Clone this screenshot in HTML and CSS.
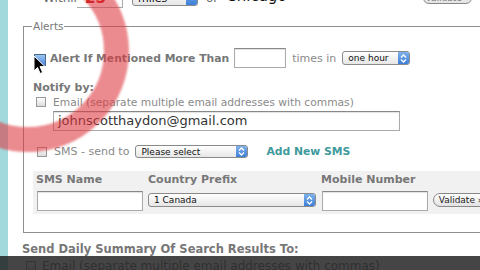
FILE: index.html
```html
<!DOCTYPE html>
<html>
<head>
<meta charset="utf-8">
<link rel="stylesheet" href="styles.css">
</head>
<body>
<div class="page">
  <div class="strip"></div>
  <div class="main">
    <div class="toprow">
      <span class="cb cb-blue"></span>
      <span class="lbl-top">Within</span>
      <span class="inp inp-dist"><span class="red">25</span></span>
      <span class="sel sel-miles"><span class="sel-text">miles</span><span class="sel-cap"></span></span>
      <span class="lbl-top or">or</span>
      <span class="inp inp-city">Chicago</span>
      <span class="btn btn-top">Validate »</span>
    </div>

    <fieldset class="alerts">
      <legend>Alerts</legend>
      <div class="row row-alert">
        <span class="cb cb-checked"></span>
        <span class="blabel">Alert If Mentioned More Than</span>
        <span class="inp inp-count"></span>
        <span class="plabel">times in</span>
        <span class="sel sel-hour"><span class="sel-text">one hour</span><span class="sel-cap"><svg width="7" height="9" viewBox="0 0 7 9"><path d="M1 3.5L3.5 1L6 3.5M1 5.5L3.5 8L6 5.5" fill="none" stroke="#fff" stroke-width="1.3"/></svg></span></span>
      </div>
      <div class="blabel notify">Notify by:</div>
      <div class="row row-email">
        <span class="cb"></span>
        <span class="plabel">Email (separate multiple email addresses with commas)</span>
      </div>
      <div class="inp inp-email">johnscotthaydon@gmail.com</div>
      <div class="row row-sms">
        <span class="cb"></span>
        <span class="plabel">SMS - send to</span>
        <span class="sel sel-please"><span class="sel-text">Please select</span><span class="sel-cap"><svg width="7" height="9" viewBox="0 0 7 9"><path d="M1 3.5L3.5 1L6 3.5M1 5.5L3.5 8L6 5.5" fill="none" stroke="#fff" stroke-width="1.3"/></svg></span></span>
        <span class="addsms">Add New SMS</span>
      </div>
      <div class="panel">
        <div class="col col-name">
          <div class="blabel">SMS Name</div>
          <div class="inp inp-name"></div>
        </div>
        <div class="col col-country">
          <div class="blabel">Country Prefix</div>
          <div class="sel sel-country"><span class="sel-text">1 Canada</span><span class="sel-cap"><svg width="7" height="9" viewBox="0 0 7 9"><path d="M1 3.5L3.5 1L6 3.5M1 5.5L3.5 8L6 5.5" fill="none" stroke="#fff" stroke-width="1.3"/></svg></span></div>
        </div>
        <div class="col col-mobile">
          <div class="blabel">Mobile Number</div>
          <div class="inp inp-mobile"></div>
        </div>
        <div class="col col-btn">
          <div class="btn btn-val">Validate »</div>
        </div>
      </div>
    </fieldset>

    <div class="blabel daily">Send Daily Summary Of Search Results To:</div>
    <div class="row row-daily">
      <span class="cb"></span>
      <span class="plabel">Email (separate multiple email addresses with commas)</span>
    </div>
  </div>
</div>

<div class="ring"></div>
<svg class="cursor" width="13" height="20" viewBox="0 0 13 20">
  <path d="M1 1L1 16L4.5 12.5L7.2 18.5L9.6 17.4L7 11.6L12 11.6Z" fill="#000" stroke="#fff" stroke-width="1"/>
</svg>
<div class="videobar"></div>
</body>
</html>
```
FILE: styles.css
```css
* { box-sizing: border-box; }
body {
  margin: 0;
  width: 480px;
  height: 270px;
  overflow: hidden;
  background: #fff;
  position: relative;
  font-family: "DejaVu Sans", Verdana, sans-serif;
  font-size: 11px;
  color: #777;
}
.page { display: flex; height: 270px; }
.strip { width: 8px; flex: none; background: #a2d9dd; }
.main { flex: 1; padding-left: 15px; margin-top: -12px; min-width: 0; }

.toprow {
  display: flex;
  align-items: center;
  height: 20px;
  padding-left: 3px;
  white-space: nowrap;
}
.lbl-top { font-size: 12px; color: #666; flex: none; }
.toprow .cb + .lbl-top { margin-left: 9px; width: 34px; overflow: hidden; }
.red { color: #c11; font-size: 15px; font-weight: bold; }
.inp {
  display: inline-block;
  background: #fff;
  border: 1px solid #aaa;
  border-top-color: #888;
  box-shadow: inset 0 1px 1px rgba(0,0,0,0.12);
  flex: none;
}
.inp-dist { width: 46px; height: 20px; padding-left: 8px; line-height: 18px; border-left: none; }
.sel {
  display: flex;
  align-items: center;
  flex: none;
  border: 1px solid #8a8a8a;
  border-radius: 3px;
  background: linear-gradient(#fff, #e6e6e6);
  font-size: 9px;
  color: #111;
  overflow: hidden;
}
.sel-text { flex: 1; padding-left: 5px; white-space: nowrap; }
.sel-cap {
  width: 11px;
  align-self: stretch;
  background: linear-gradient(#7fb2ec, #3c7fd8);
  display: flex;
  align-items: center;
  justify-content: center;
}
.sel-miles { width: 66px; height: 16px; margin-left: 9px; font-size: 11px; }
.or { margin-left: 8px; }
.inp-city { width: 192px; height: 20px; margin-left: 0; padding-left: 8px; font-size: 15px; color: #111; line-height: 16px; border: none; box-shadow: none; }
.btn {
  flex: none;
  border: 1px solid #888;
  border-radius: 8px;
  background: linear-gradient(#fff, #e2e2e2);
  color: #222;
  font-size: 9px;
  white-space: nowrap;
  display: flex;
  align-items: center;
  justify-content: center;
}
.btn-top { width: 49px; height: 12px; margin-left: 13px; color: #777; }

.cb {
  display: inline-block;
  flex: none;
  width: 10px;
  height: 10px;
  border: 1px solid #999;
  background: linear-gradient(#fff, #ddd);
}
.cb-blue { width: 8px; background: linear-gradient(#9cc3f0, #4a88dd); border-color: #5580b0; margin-top: -6px; }
.cb-checked { width: 12px; height: 12px; background: linear-gradient(#9cc3f0, #4a88dd); border-color: #4a6a90; }

.alerts {
  margin: 12px 0 0 0;
  padding: 15px 0 18px 9px;
  border: 1px solid #8f8f8f;
  border-right: none;
  min-width: 0;
  width: 470px;
}
.alerts legend {
  margin-left: -1px;
  padding: 0 1px;
  font-size: 10.5px;
  color: #777;
  line-height: 13px;
}
.row { display: flex; align-items: center; white-space: nowrap; }
.blabel { font-weight: bold; color: #777; white-space: nowrap; }
.plabel { color: #8a8a8a; }
.row-alert { height: 20px; }
.row-alert .cb { margin-left: 1px; margin-top: 3px; }
.row-alert .blabel { margin-left: 4px; font-size: 10.8px; }
.inp-count { width: 52px; height: 20px; margin-left: 5px; }
.row-alert .plabel { margin-left: 6px; font-size: 11px; }
.sel-hour { width: 68px; height: 14px; margin-left: 6px; }

.notify { margin-top: 14px; line-height: 12px; }
.row-email { margin-top: 2px; height: 12px; }
.row-email .cb { margin-left: 3px; }
.row-email .plabel { margin-left: 7px; font-size: 10.7px; }
.inp-email {
  display: block;
  margin: 3px 0 0 20px;
  width: 347px;
  height: 20px;
  padding-left: 4px;
  font-size: 13px;
  line-height: 18px;
  color: #333;
}
.row-sms { margin-top: 14px; height: 13px; }
.row-sms .cb { margin-left: 4px; }
.row-sms .plabel { margin-left: 7px; font-size: 11px; }
.sel-please { width: 113px; height: 13px; margin-left: 6px; }
.addsms { margin-left: 18px; font-weight: bold; color: #3e9a9c; font-size: 10.8px; }

.panel {
  margin-top: 13px;
  height: 43px;
  background: #f1f1f1;
  display: flex;
  padding: 3px 0 0 3px;
  gap: 5px;
}
.col { display: flex; flex-direction: column; gap: 5px; flex: none; }
.col .blabel { line-height: 12px; }
.inp-name { display: block; width: 106px; height: 20px; margin-left: 1px; }
.col-name { width: 107px; }
.col-country { width: 168px; }
.sel-country { width: 168px; height: 14px; margin-top: 2px; }
.col-mobile { width: 107px; }
.inp-mobile { display: block; width: 106px; height: 20px; margin-left: 1px; }
.col-btn { padding-top: 19px; }
.btn-val { width: 56px; height: 14px; }

.daily { margin: 10px 0 0 -1px; font-size: 11.5px; line-height: 12px; }
.row-daily { margin-top: 4px; }
.row-daily .cb { margin-left: 3px; }
.row-daily .plabel { margin-left: 6px; font-size: 12px; }

.ring {
  position: absolute;
  left: -73px;
  top: -50px;
  width: 202px;
  height: 202px;
  border-radius: 50%;
  border: 25px solid rgba(222, 55, 62, 0.58);
  filter: blur(0.8px);
}
.cursor { position: absolute; left: 33px; top: 55px; }
.videobar {
  position: absolute;
  left: 0;
  right: 0;
  top: 256px;
  height: 14px;
  background: rgba(28, 28, 28, 0.82);
}
```
